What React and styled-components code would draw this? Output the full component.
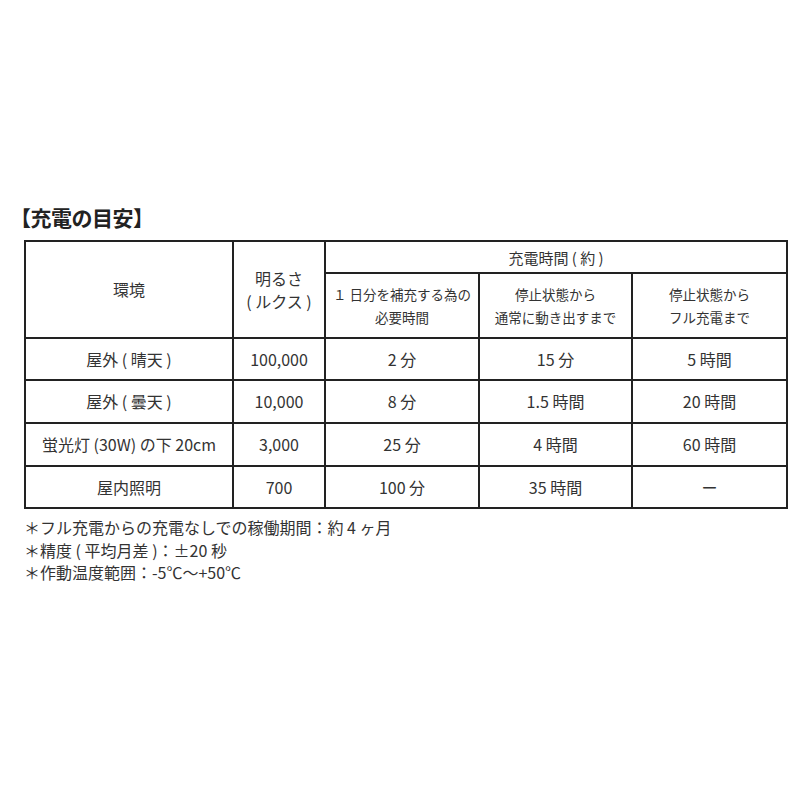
import React from 'react'
import styled, { createGlobalStyle } from 'styled-components'

const GlobalStyle = createGlobalStyle`
  html, body {
    margin: 0;
    padding: 0;
    background: #fff;
  }
  body {
    font-family: "Noto Sans CJK JP", "Noto Sans", sans-serif;
    color: #333;
  }
`

const Page = styled.div`
  width: 800px;
  height: 800px;
  padding: 202px 0 0 24px;
  box-sizing: border-box;
`

const Title = styled.h2`
  margin: 0 0 8px -14px;
  font-size: 21px;
  line-height: 30px;
  font-weight: 700;
  color: #222;
  letter-spacing: -0.5px;
`

const Table = styled.table`
  table-layout: fixed;
  border-collapse: collapse;
  width: 762px;
`

const Col = styled.col`
  width: ${p => p.$w}px;
`

const Row = styled.tr`
  height: ${p => p.$h}px;
`

const Cell = styled.td`
  border: 2px solid #222;
  padding: 0;
  text-align: center;
  vertical-align: middle;
  font-size: ${p => p.$size || 16}px;
  line-height: ${p => p.$lh || 23}px;
  color: #333;
  white-space: nowrap;
`

const Notes = styled.div`
  margin-top: 7px;
  font-size: 16px;
  line-height: 22.5px;
  color: #333;
`

const Note = styled.div``

const rows = [
  { h: 42, env: '屋外 ( 晴天 )', lux: '100,000', a: '2 分', b: '15 分', c: '5 時間' },
  { h: 43, env: '屋外 ( 曇天 )', lux: '10,000', a: '8 分', b: '1.5 時間', c: '20 時間' },
  { h: 43, env: '蛍光灯 (30W) の下 20cm', lux: '3,000', a: '25 分', b: '4 時間', c: '60 時間' },
  { h: 42, env: '屋内照明', lux: '700', a: '100 分', b: '35 時間', c: 'ー' }
]

export default function App () {
  return (
    <Page>
      <GlobalStyle />
      <Title>【充電の目安】</Title>
      <Table>
        <colgroup>
          <Col $w={208} />
          <Col $w={92} />
          <Col $w={154} />
          <Col $w={153} />
          <Col $w={155} />
        </colgroup>
        <tbody>
          <Row $h={32}>
            <Cell rowSpan={2}>環境</Cell>
            <Cell rowSpan={2}>明るさ<br />( ルクス )</Cell>
            <Cell colSpan={3} $size={15}>充電時間 ( 約 )</Cell>
          </Row>
          <Row $h={65}>
            <Cell $size={13.5}>１ 日分を補充する為の<br />必要時間</Cell>
            <Cell $size={13.5}>停止状態から<br />通常に動き出すまで</Cell>
            <Cell $size={13.5}>停止状態から<br />フル充電まで</Cell>
          </Row>
          {rows.map(r => (
            <Row key={r.env} $h={r.h}>
              <Cell>{r.env}</Cell>
              <Cell>{r.lux}</Cell>
              <Cell>{r.a}</Cell>
              <Cell>{r.b}</Cell>
              <Cell>{r.c}</Cell>
            </Row>
          ))}
        </tbody>
      </Table>
      <Notes>
        <Note>＊フル充電からの充電なしでの稼働期間：約 4 ヶ月</Note>
        <Note>＊精度 ( 平均月差 )：±20 秒</Note>
        <Note>＊作動温度範囲：-5℃〜+50℃</Note>
      </Notes>
    </Page>
  )
}
